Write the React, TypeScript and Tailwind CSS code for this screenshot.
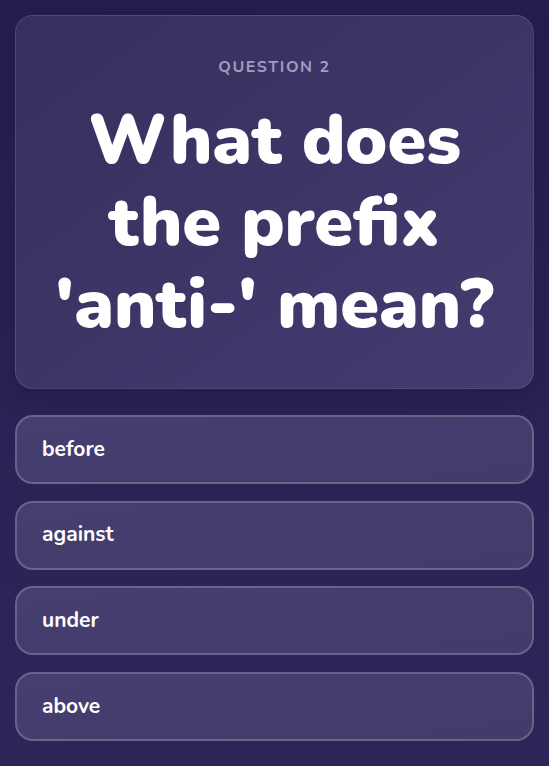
import React from "react";

const options = ["before", "against", "under", "above"];

export default function App() {
  return (
    <div
      className="min-h-[766px] w-full bg-gradient-to-b from-[#241e4e] to-[#2e2659] px-[15px] pt-[15px] pb-[24px]"
      style={{ fontFamily: '"Nunito", "Lato", "Noto Sans", sans-serif' }}
    >
      <div className="rounded-[18px] border border-white/10 bg-gradient-to-br from-[#372f5d] to-[#443b70] px-[24px] pt-[41px] pb-[43px] text-center shadow-[0_8px_24px_rgba(0,0,0,0.15)]">
        <div className="text-[16px] font-bold uppercase tracking-[0.1em] leading-[20px] text-[#a29cbd]">
          Question 2
        </div>
        <h1 className="mt-[22px] text-[70px] font-black leading-[82px] text-white">
          What does the prefix 'anti-' mean?
        </h1>
      </div>
      <div className="mt-[26px] flex flex-col gap-[16.6px]">
        {options.map((o) => (
          <button
            key={o}
            className="flex h-[69px] w-full items-center rounded-[18px] border-2 border-white/20 bg-gradient-to-br from-[#463e6f] to-[#433b69] px-[25px] text-left text-[21px] font-bold text-white"
          >
            {o}
          </button>
        ))}
      </div>
    </div>
  );
}
